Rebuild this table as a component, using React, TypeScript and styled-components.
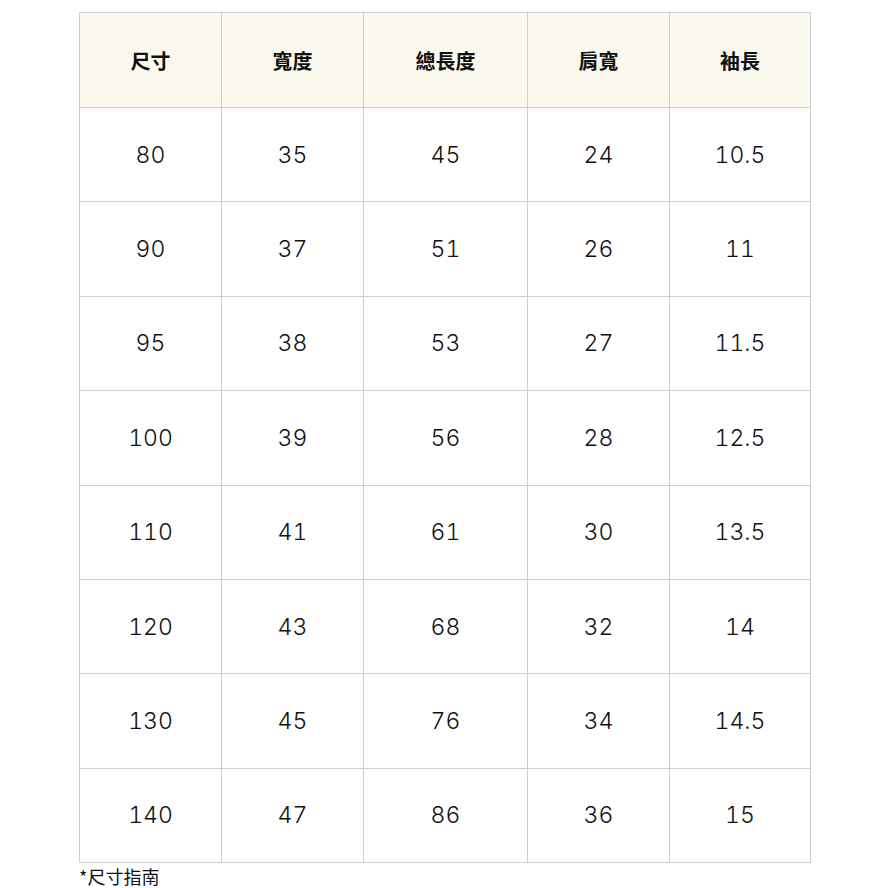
import React from "react";
import styled, { createGlobalStyle } from "styled-components";

const Global = createGlobalStyle`
  html, body { margin: 0; padding: 0; background: #ffffff; }
  body { font-family: "Inter", "Noto Sans CJK TC", sans-serif; color: #1a1a1a; }
`;

const Page = styled.div`
  width: 888px;
  box-sizing: border-box;
  padding: 12px 0 0 79px;
`;

const Table = styled.table`
  border-collapse: collapse;
  table-layout: fixed;
  width: 731px;
`;

const Col = styled.col<{ $w: number }>`
  width: ${(p) => p.$w}px;
`;

const HeadRow = styled.tr`
  height: 95px;
  background: #fbf8ee;
`;

const Row = styled.tr`
  height: 94.4px;
`;

const Th = styled.th`
  box-sizing: border-box;
  border: 1px solid #cfcfcf;
  padding: 0;
  text-align: center;
  vertical-align: middle;
  font-family: "Noto Sans CJK TC", sans-serif;
  font-weight: 700;
  font-size: 20px;
  color: #111;
`;

const Td = styled.td`
  box-sizing: border-box;
  border: 1px solid #cfcfcf;
  padding: 0;
  text-align: center;
  vertical-align: middle;
  font-family: "Inter", "Noto Sans", sans-serif;
  font-size: 23px;
  font-weight: 300;
  font-variant-numeric: tabular-nums;
  letter-spacing: 0;
  color: #111;
`;

const Note = styled.div`
  margin-top: 3px;
  font-family: "Noto Sans CJK TC", sans-serif;
  font-size: 18px;
  line-height: 20px;
  color: #111;
`;

const widths = [142, 142, 164, 142, 141];
const headers = ["尺寸", "寬度", "總長度", "肩寬", "袖長"];

const rows = [
  ["80", "35", "45", "24", "10.5"],
  ["90", "37", "51", "26", "11"],
  ["95", "38", "53", "27", "11.5"],
  ["100", "39", "56", "28", "12.5"],
  ["110", "41", "61", "30", "13.5"],
  ["120", "43", "68", "32", "14"],
  ["130", "45", "76", "34", "14.5"],
  ["140", "47", "86", "36", "15"],
];

export default function App() {
  return (
    <>
      <Global />
      <Page>
        <Table>
          <colgroup>
            {widths.map((w, i) => (
              <Col key={i} $w={w} />
            ))}
          </colgroup>
          <thead>
            <HeadRow>
              {headers.map((h) => (
                <Th key={h}>{h}</Th>
              ))}
            </HeadRow>
          </thead>
          <tbody>
            {rows.map((r, i) => (
              <Row key={i}>
                {r.map((c, j) => (
                  <Td key={j}>{c}</Td>
                ))}
              </Row>
            ))}
          </tbody>
        </Table>
        <Note>*尺寸指南</Note>
      </Page>
    </>
  );
}
